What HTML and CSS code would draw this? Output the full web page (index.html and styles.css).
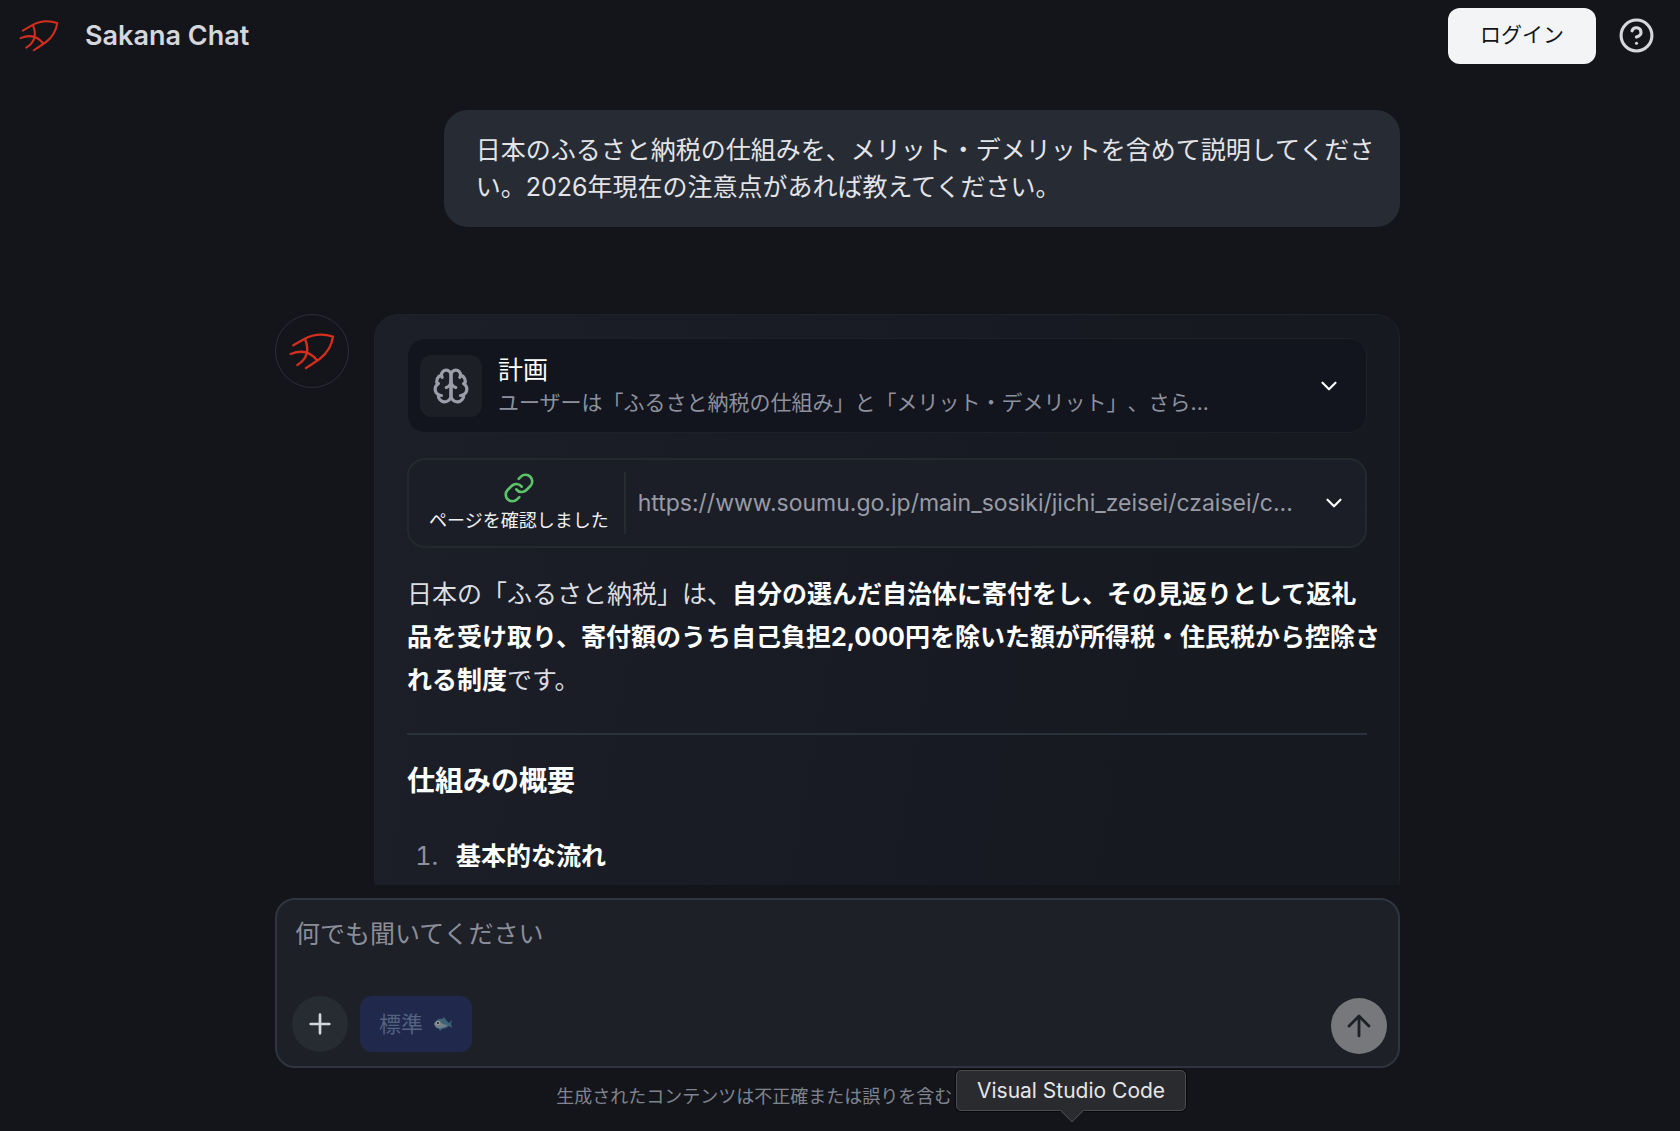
FILE: index.html
```html
<!doctype html>
<html lang="ja">

<head>
    <meta charset="utf-8">
    <meta name="viewport" content="width=device-width, initial-scale=1.0">
    <title>Sakana Chat</title>
    <link rel="stylesheet" href="styles.css">
</head>

<body>

    <svg class="defs" aria-hidden="true">
        <symbol id="logo" viewBox="88 96 138 114">
            <path d="M101 136 L134 117 Q174 95 220 110 Q214 150 182 175 Q176 180 139 204" />
            <path d="M136 117 Q157 168 113 195" />
            <path d="M93 162 Q142 142 172 181" />
        </symbol>
        <symbol id="chevron" viewBox="0 0 24 24">
            <path d="m6 9 6 6 6-6" />
        </symbol>
    </svg>

    <header class="topbar">
        <a href="#" class="brand">
            <svg class="logo logo_small" aria-hidden="true"><use href="#logo" /></svg>
            <span>Sakana Chat</span>
        </a>
        <div class="topbar_right">
            <button type="button" class="btn_login">ログイン</button>
            <button type="button" class="btn_help" aria-label="ヘルプ">
                <svg class="icon" viewBox="0 0 24 24" width="37" height="37">
                    <circle cx="12" cy="12" r="10" />
                    <path d="M9.09 9a3 3 0 0 1 5.83 1c0 2-3 3-3 3" />
                    <path d="M12 17h.01" />
                </svg>
            </button>
        </div>
    </header>

    <div class="page">
        <main class="chat">
            <div class="column messages">
                <div class="bubble">日本のふるさと納税の仕組みを、メリット・デメリットを含めて説明してください。2026年現在の注意点があれば教えてください。</div>

                <div class="answer">
                    <div class="avatar">
                        <svg class="logo" aria-hidden="true"><use href="#logo" /></svg>
                    </div>
                    <div class="card">
                        <button type="button" class="step plan">
                            <span class="plan_icon">
                                <svg class="icon" viewBox="0 0 24 24" width="38" height="38">
                                    <path d="M12 5a3 3 0 1 0-5.997.125 4 4 0 0 0-2.526 5.77 4 4 0 0 0 .556 6.588A4 4 0 1 0 12 18Z" />
                                    <path d="M12 5a3 3 0 1 1 5.997.125 4 4 0 0 1 2.526 5.77 4 4 0 0 1-.556 6.588A4 4 0 1 1 12 18Z" />
                                    <path d="M15 13a4.5 4.5 0 0 1-3-4 4.5 4.5 0 0 1-3 4" />
                                    <path d="M17.599 6.5a3 3 0 0 0 .399-1.375" />
                                    <path d="M6.003 5.125A3 3 0 0 0 6.401 6.5" />
                                    <path d="M3.477 10.896a4 4 0 0 1 .585-.396" />
                                    <path d="M19.938 10.5a4 4 0 0 1 .585.396" />
                                    <path d="M6 18a4 4 0 0 1-1.967-.516" />
                                    <path d="M19.967 17.484A4 4 0 0 1 18 18" />
                                </svg>
                            </span>
                            <span class="plan_text">
                                <span class="plan_title">計画</span>
                                <span class="plan_sub">ユーザーは「ふるさと納税の仕組み」と「メリット・デメリット」、さら...</span>
                            </span>
                            <svg class="icon chevron" aria-hidden="true"><use href="#chevron" /></svg>
                        </button>

                        <button type="button" class="step source">
                            <span class="source_state">
                                <svg class="icon" viewBox="0 0 24 24" width="32" height="32">
                                    <path d="M10 13a5 5 0 0 0 7.54.54l3-3a5 5 0 0 0-7.07-7.07l-1.72 1.71" />
                                    <path d="M14 11a5 5 0 0 0-7.54-.54l-3 3a5 5 0 0 0 7.07 7.07l1.71-1.71" />
                                </svg>
                                <span>ページを確認しました</span>
                            </span>
                            <span class="source_url">https://www.soumu.go.jp/main_sosiki/jichi_zeisei/czaisei/c...</span>
                            <svg class="icon chevron" aria-hidden="true"><use href="#chevron" /></svg>
                        </button>

                        <div class="prose">
                            <p>日本の「ふるさと納税」は、<strong>自分の選んだ自治体に寄付をし、その見返りとして返礼<br>品を受け取り、寄付額のうち自己負担2,000円を除いた額が所得税・住民税から控除さ<br>れる制度</strong>です。</p>
                            <hr>
                            <h3>仕組みの概要</h3>
                            <ol>
                                <li><strong>基本的な流れ</strong></li>
                            </ol>
                        </div>
                    </div>
                </div>
            </div>
        </main>

        <footer class="column dock">
            <form class="composer">
                <textarea aria-label="メッセージ" placeholder="何でも聞いてください" rows="1"></textarea>
                <div class="tools">
                    <button type="button" class="btn_round btn_add" aria-label="追加">
                        <svg class="icon" viewBox="0 0 24 24" width="32" height="32">
                            <path d="M5 12h14M12 5v14" />
                        </svg>
                    </button>
                    <button type="button" class="btn_mode">標準
                        <svg viewBox="0 0 20 14" width="20" height="14" aria-hidden="true">
                            <path fill="#3e6377" d="M1 7Q4 1 9 2L11 0 13 3 16 6 19 3 18 7 19 11 16 9Q13 12 9 12L7 14 6 12Q2 11 1 7Z" />
                            <path fill="#75808b" d="M1 7Q3 3 7 4 9 8 15 8 10 12 5 11 2 10 1 7Z" />
                            <circle fill="#a19f91" cx="5" cy="6" r="2" />
                            <circle fill="#16181e" cx="5" cy="6" r="1" />
                        </svg>
                    </button>
                    <button type="submit" class="btn_round btn_send" aria-label="送信" disabled>
                        <svg class="icon" viewBox="0 0 24 24" width="34" height="34">
                            <path d="m5 12 7-7 7 7M12 19V5" />
                        </svg>
                    </button>
                </div>
            </form>
            <p class="note">生成されたコンテンツは不正確または誤りを含む</p>
            <div class="tooltip" role="tooltip">Visual Studio Code</div>
        </footer>
    </div>

</body>

</html>
```

FILE: styles.css
```css
* {
    box-sizing: border-box;
    padding: 0;
    margin: 0;
}

body {
    display: flex;
    flex-direction: column;
    height: 100vh;
    overflow: hidden;
    background: #14151a;
    color: #e3e4e8;
    font-family: Inter, "Noto Sans CJK JP", sans-serif;
    font-size: 25px;
    line-height: 37px;
    text-spacing-trim: space-all;
}

button,
textarea {
    font: inherit;
    color: inherit;
    border: none;
    background: none;
}

.defs {
    position: absolute;
    width: 0;
    height: 0;
}

.icon {
    flex: none;
    fill: none;
    stroke: currentColor;
    stroke-width: 2;
    stroke-linecap: round;
    stroke-linejoin: round;
}

.logo {
    width: 46px;
    height: 38px;
    fill: none;
    stroke: #d42e1e;
    stroke-width: 7;
    stroke-linecap: round;
    stroke-linejoin: round;
}

.logo_small {
    width: 40px;
    height: 33px;
}

.chevron {
    width: 26px;
    height: 26px;
    color: #fff;
}

/* header */
.topbar {
    flex: none;
    display: flex;
    align-items: center;
    justify-content: space-between;
    height: 71px;
    padding: 0 25px 0 19px;
}

.brand {
    display: flex;
    align-items: center;
    gap: 26px;
    color: #d5d7dc;
    font-size: 27px;
    font-weight: 600;
    text-decoration: none;
}

.topbar_right {
    display: flex;
    align-items: center;
    gap: 22px;
}

.btn_login {
    height: 56px;
    padding: 0 32px 2px;
    border-radius: 12px;
    background: #f3f4f6;
    color: #14151a;
    font-size: 21px;
}

.btn_help {
    display: flex;
    color: #d5d7dc;
}

.page {
    flex: 1;
    min-height: 0;
    display: flex;
    flex-direction: column;
    padding-right: 5px;
}

/* conversation */
.chat {
    flex: 1;
    min-height: 0;
    overflow: hidden;
}

.column {
    width: calc(100% - 48px);
    max-width: 1125px;
    margin: 0 auto;
}

.messages {
    display: flex;
    flex-direction: column;
    gap: 87px;
    padding-top: 39px;
}

.bubble {
    align-self: flex-end;
    width: 85%;
    padding: 22px 22px 21px 32px;
    border-radius: 24px;
    background: #272b33;
}

.answer {
    display: flex;
    align-items: flex-start;
    gap: 25px;
}

.avatar {
    flex: none;
    display: flex;
    align-items: center;
    justify-content: center;
    width: 74px;
    height: 74px;
    border: 1px solid #2a2f36;
    border-radius: 50%;
}

.card {
    flex: 1;
    min-width: 0;
    display: flex;
    flex-direction: column;
    gap: 25px;
    padding: 23px 32px;
    border: 1px solid #1f2227;
    border-radius: 24px;
    background: linear-gradient(100deg, #1c1f27, #171a22 60%, #16191e);
}

.step {
    display: flex;
    align-items: center;
    width: 100%;
    border-radius: 18px;
    text-align: left;
}

.plan {
    gap: 16px;
    height: 95px;
    padding: 0 24px 0 12px;
    border: 1px solid #1c2027;
    background: #12151d;
}

.plan_icon {
    flex: none;
    display: flex;
    align-items: center;
    justify-content: center;
    width: 62px;
    height: 62px;
    border-radius: 12px;
    background: #1c1f26;
    color: #9b9ea9;
}

.plan_text {
    flex: 1;
    min-width: 0;
    display: flex;
    flex-direction: column;
}

.plan_title {
    line-height: 34px;
    color: #fff;
}

.plan_sub {
    color: #8e919d;
    font-size: 21px;
    line-height: 32px;
    white-space: nowrap;
}

.source {
    gap: 12px;
    height: 90px;
    padding: 0 18px;
    border: 2px solid #24282f;
    background: #1b1e26;
}

.source_state {
    flex: none;
    display: flex;
    flex-direction: column;
    align-items: center;
    gap: 4px;
    padding: 0 15px 0 2px;
    border-right: 2px solid #262a31;
    color: #f0f1f3;
    font-size: 18px;
    line-height: 26px;
}

.source_state .icon {
    color: #5cc468;
}

.source_url {
    flex: 1;
    min-width: 0;
    color: #989ba6;
    font-size: 23px;
    white-space: nowrap;
}

.prose {
    color: #dcdee2;
    line-height: 43px;
}

/* long lines may run slightly into the card padding */
.prose p {
    margin-right: -16px;
    white-space: nowrap;
}

.prose strong,
.prose h3 {
    color: #fff;
    font-weight: 700;
}

.prose hr {
    height: 2px;
    margin: 31px 0 25px;
    border: none;
    background: #2c323c;
}

.prose h3 {
    font-size: 28px;
}

.prose ol {
    margin-top: 32px;
    padding-left: 38px;
}

.prose li {
    padding-left: 11px;
}

.prose li::marker {
    color: #8e919d;
}

/* input area */
.dock {
    position: relative;
    flex: none;
    padding-top: 13px;
}

.composer {
    display: flex;
    flex-direction: column;
    justify-content: space-between;
    height: 170px;
    padding: 16px 11px 12px 15px;
    border: 2px solid #2f3540;
    border-radius: 20px;
    background: #1d2027;
}

.composer textarea {
    height: 37px;
    padding: 0 3px;
    resize: none;
    outline: none;
}

.composer textarea::placeholder {
    color: #8b8e99;
    opacity: 1;
}

.tools {
    display: flex;
    align-items: flex-start;
    gap: 12px;
    height: 58px;
}

.btn_round {
    display: flex;
    align-items: center;
    justify-content: center;
    width: 56px;
    height: 56px;
    border-radius: 50%;
}

.btn_add {
    background: #272b32;
    color: #d5d7dc;
}

.btn_mode {
    display: flex;
    align-items: center;
    gap: 10px;
    height: 56px;
    padding: 0 19px;
    border-radius: 12px;
    background: #20284c;
    color: #52627f;
    font-size: 22px;
}

.btn_send {
    align-self: flex-end;
    margin-left: auto;
    background: #77787c;
    color: #1d2027;
}

.note {
    height: 63px;
    padding: 15px 0 0 25%;
    color: #80848e;
    font-size: 18px;
    line-height: 28px;
}

/* dock label floating over the page */
.tooltip {
    position: absolute;
    left: 681px;
    bottom: 20px;
    padding: 0 20px;
    border: 1px solid #4b4c50;
    border-radius: 5px;
    background: #2a2b2f;
    box-shadow: 0 0 0 1px #08090b;
    color: #e6e6e8;
    font-size: 21px;
    line-height: 39px;
    white-space: nowrap;
}

.tooltip::after {
    content: '';
    position: absolute;
    left: 50%;
    bottom: -9px;
    width: 17px;
    height: 17px;
    margin-left: -8px;
    border: solid #4b4c50;
    border-width: 0 1px 1px 0;
    background: #2a2b2f;
    clip-path: polygon(100% 0, 100% 100%, 0 100%);
    transform: rotate(45deg);
}
```
